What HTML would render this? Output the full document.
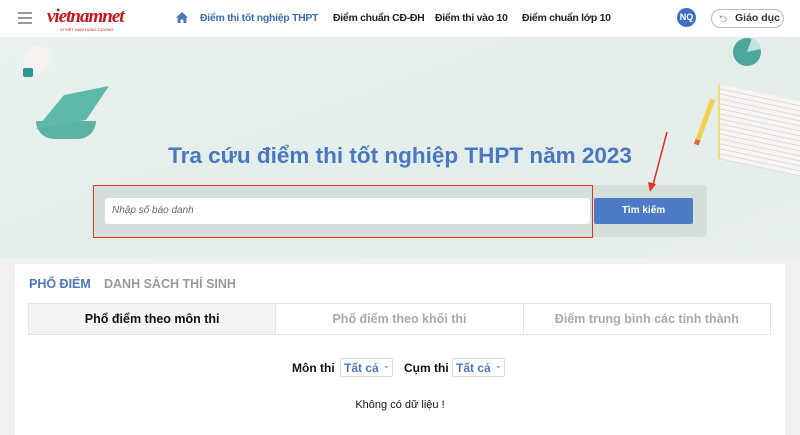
<!DOCTYPE html>
<html><head><meta charset="utf-8"><style>
*{margin:0;padding:0;box-sizing:border-box}
body{width:800px;height:435px;overflow:hidden;font-family:"Liberation Sans",sans-serif;background:#eff1f0;position:relative;white-space:nowrap}
.hdr{position:absolute;left:0;top:0;width:800px;height:37px;background:#fff;box-shadow:0 1px 2px rgba(0,0,0,.06)}
.hdr .nav{position:absolute;top:12px;font-size:10.5px;font-weight:bold;color:#222;letter-spacing:-0.3px}
.hero{position:absolute;left:0;top:37px;width:800px;height:222px;background:linear-gradient(160deg,#e9f1ee 0%,#e3ede9 60%,#e8efec 100%)}
.abs{position:absolute}
</style></head><body>
<div class="hdr">
 <div class="abs" style="left:18px;top:12px;width:14px;height:2px;background:#999;box-shadow:0 5px 0 #999,0 10px 0 #999"></div>
 <div class="abs" style="left:47px;top:6px;font-family:'Liberation Serif',serif;font-size:19px;font-weight:bold;color:#c8171e;letter-spacing:-1px;font-style:italic">vietnamnet</div>
 <div class="abs" style="left:60px;top:27px;font-size:4px;color:#c8171e">VÌ VIỆT NAM HÙNG CƯỜNG</div>
 <svg class="abs" style="left:176px;top:12px" width="12" height="11" viewBox="0 0 12 11"><path d="M6 0L0 5.5h1.6V11h3V7.5h2.8V11h3V5.5H12z" fill="#4a78c0"/></svg>
 <div class="nav" style="left:200px;color:#3d6db5">Điểm thi tốt nghiệp THPT</div>
 <div class="nav" style="left:333px">Điểm chuẩn CĐ-ĐH</div>
 <div class="nav" style="left:435px">Điểm thi vào 10</div>
 <div class="nav" style="left:522px">Điểm chuẩn lớp 10</div>
 <div class="abs" style="left:677px;top:8px;width:19px;height:19px;border-radius:50%;background:#3f6fc0;color:#fff;font-size:9px;font-weight:bold;text-align:center;line-height:19px">NQ</div>
 <div class="abs" style="left:711px;top:9px;width:73px;height:19px;border:1px solid #bbb;border-radius:10px;font-size:10.5px;font-weight:bold;color:#333;line-height:17px;padding-left:23px">Giáo dục</div>
 <div class="abs" style="left:719px;top:12px;font-size:10px;color:#888">⮌</div>
</div>
<div class="hero">
 <div class="abs" style="left:26px;top:11px;width:22px;height:22px;border-radius:50%;background:#f7f2ee;box-shadow:0 0 6px #fff"></div>
 <div class="abs" style="left:23px;top:31px;width:10px;height:9px;background:#2f9a8e;border-radius:2px"></div>
 <div class="abs" style="left:36px;top:84px;width:60px;height:18px;background:#5cb3a5;border-radius:0 0 20px 20px"></div>
 <svg class="abs" style="left:34px;top:48px" width="80" height="45"><polygon points="2,44 30,10 75,1 52,35" fill="#5fb9a9"/></svg>
 <svg class="abs" style="left:732px;top:0" width="30" height="30"><circle cx="15" cy="15" r="14" fill="#4aa79a"/><path d="M15 15L20 1A14 14 0 0 1 29 12Z" fill="#bfe3e3"/></svg>
 <div class="abs" style="left:702px;top:61px;width:5px;height:48px;background:#f0d24a;transform:rotate(20deg);border-bottom:5px solid #e06a55"></div>
 <div class="abs" style="left:718px;top:56px;width:85px;height:75px;background:#fbf3ef;border-left:2px solid #f0dc7a;transform:skewY(12deg);background-image:repeating-linear-gradient(#fbf3ef 0 4px,#cfdfe6 4px 5px)"></div>
</div>
<div class="abs" style="left:0;top:143px;width:800px;text-align:center;font-size:22.5px;font-weight:bold;color:#4a78c0">Tra cứu điểm thi tốt nghiệp THPT năm 2023</div>
<div class="abs" style="left:93px;top:185px;width:614px;height:52px;background:#d5e0da;border-radius:3px"></div>
<div class="abs" style="left:105px;top:198px;width:485px;height:26px;background:#fff;border-radius:3px;font-size:10px;font-style:italic;color:#666;padding:7px 0 0 7px">Nhập số báo danh</div>
<div class="abs" style="left:594px;top:198px;width:99px;height:26px;background:#4d7cc4;border-radius:2px;color:#fff;font-size:10px;font-weight:bold;text-align:center;line-height:26px">Tìm kiếm</div>
<div class="abs" style="left:93px;top:185px;width:500px;height:53px;border:1.5px solid #e8321f"></div>
<svg class="abs" style="left:645px;top:130px" width="25" height="65"><line x1="22" y1="2" x2="8" y2="55" stroke="#e8321f" stroke-width="1.5"/><polygon points="3,52 11,54 5,62" fill="#e8321f"/></svg>
<div class="abs" style="left:15px;top:264px;width:770px;height:171px;background:#fff"></div>
<div class="abs" style="left:29px;top:277px;font-size:12.5px;font-weight:bold;color:#4a78c0">PHỔ ĐIỂM</div>
<div class="abs" style="left:104px;top:277px;font-size:12.5px;font-weight:bold;color:#999">DANH SÁCH THÍ SINH</div>
<div class="abs" style="left:28px;top:303px;width:743px;height:32px;border:1px solid #e5e5e5;display:flex;font-size:12.5px;font-weight:bold;color:#aaa">
 <div style="flex:1;background:#f4f4f4;color:#111;text-align:center;line-height:30px">Phổ điểm theo môn thi</div>
 <div style="flex:1;border-left:1px solid #e5e5e5;text-align:center;line-height:30px">Phổ điểm theo khối thi</div>
 <div style="flex:1;border-left:1px solid #e5e5e5;text-align:center;line-height:30px">Điểm trung bình các tỉnh thành</div>
</div>
<div class="abs" style="left:292px;top:361px;font-size:12px;font-weight:bold;color:#111">Môn thi</div>
<div class="abs" style="left:340px;top:358px;width:53px;height:19px;border:1px solid #ddd;border-radius:2px;font-size:12px;font-weight:bold;color:#4a78c0;padding:2px 0 0 3px">Tất cả<span class="abs" style="left:42px;top:2px;font-size:8px;color:#999">⌄</span></div>
<div class="abs" style="left:404px;top:361px;font-size:12px;font-weight:bold;color:#111">Cụm thi</div>
<div class="abs" style="left:452px;top:358px;width:53px;height:19px;border:1px solid #ddd;border-radius:2px;font-size:12px;font-weight:bold;color:#4a78c0;padding:2px 0 0 3px">Tất cả<span class="abs" style="left:42px;top:2px;font-size:8px;color:#999">⌄</span></div>
<div class="abs" style="left:0;top:399px;width:800px;text-align:center;font-size:11px;color:#111">Không có dữ liệu !</div>
</body></html>
